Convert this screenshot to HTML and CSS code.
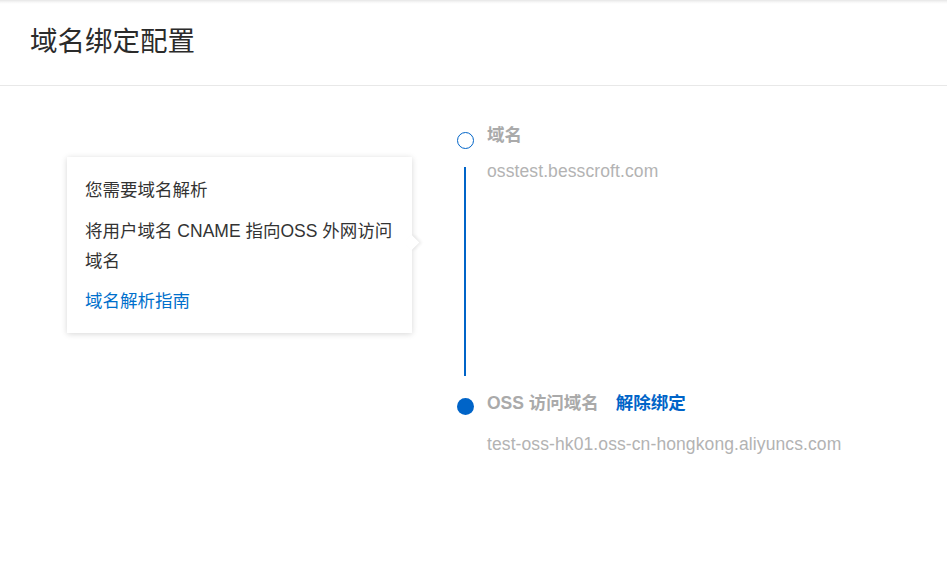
FILE: index.html
```html
<!DOCTYPE html>
<html lang="zh-CN">
<head>
<meta charset="utf-8">
<title>域名绑定配置</title>
<link rel="stylesheet" href="styles.css">
</head>
<body>
<header class="page-header">
  <h1 class="page-title">域名绑定配置</h1>
</header>
<main class="content">
  <div class="tip">
    <p class="tip-line">您需要域名解析</p>
    <p class="tip-line tip-gap">将用户域名 CNAME 指向OSS 外网访问域名</p>
    <a class="tip-link" href="#">域名解析指南</a>
    <span class="tip-arrow"></span>
  </div>
  <div class="timeline">
    <span class="dot dot-outline"></span>
    <div class="step-title">域名</div>
    <span class="connector"></span>
    <div class="step-value">osstest.besscroft.com</div>
    <span class="dot dot-filled"></span>
    <div class="step-title step-title-2">OSS 访问域名<a class="unbind" href="#">解除绑定</a></div>
    <span class="empty"></span>
    <div class="step-value step-value-2">test-oss-hk01.oss-cn-hongkong.aliyuncs.com</div>
  </div>
</main>
</body>
</html>
```
FILE: styles.css
```css
* { box-sizing: border-box; }
html, body { margin: 0; padding: 0; background: #fff; }
body {
  font-family: "Liberation Sans", "Noto Sans CJK SC", sans-serif;
  color: #333;
  width: 947px;
  height: 581px;
  overflow: hidden;
}
.page-header {
  height: 86px;
  border-bottom: 1px solid #e8e8e8;
  background: linear-gradient(to bottom, #e6e6e6 0, #f6f6f6 2px, #fff 4px);
  padding: 24px 0 0 30px;
}
.page-title {
  margin: 0;
  font-weight: normal;
  font-size: 27.5px;
  line-height: 36px;
  color: #2b2b2b;
}
.content {
  display: flex;
  align-items: flex-start;
  padding-left: 67px;
}
.tip {
  position: relative;
  width: 345px;
  margin-top: 71px;
  padding: 18px 14px 17px 18px;
  background: #fff;
  box-shadow: 0 1px 6px rgba(0, 0, 0, 0.16);
  font-size: 17.5px;
  line-height: 30px;
}
.tip-line { margin: 0; color: #333; }
.tip-gap { margin-top: 11px; }
.tip-link {
  display: block;
  margin-top: 10px;
  color: #0070cc;
  text-decoration: none;
}
.tip-arrow {
  position: absolute;
  right: -5px;
  top: 80px;
  width: 11px;
  height: 11px;
  background: #fff;
  transform: rotate(45deg);
  box-shadow: 2px -2px 3px rgba(0, 0, 0, 0.07);
}
.timeline {
  margin-top: 37px;
  margin-left: 44px;
  display: grid;
  grid-template-columns: 18px auto;
  column-gap: 13px;
  align-items: start;
}
.dot {
  width: 17px;
  height: 17px;
  border-radius: 50%;
  justify-self: center;
}
.dot-outline {
  margin-top: 9px;
  border: 1.5px solid #0064c8;
  background: #fff;
}
.dot-filled {
  margin-top: 22px;
  background: #0064c8;
}
.connector {
  justify-self: center;
  display: block;
  width: 2px;
  height: 209px;
  margin-top: 18px;
  background: #0064c8;
}
.step-title {
  font-size: 17.5px;
  line-height: 24px;
  font-weight: bold;
  color: #aaa;
}
.step-title-2 { margin-top: 15px; }
.unbind {
  margin-left: 17px;
  color: #0064c8;
  text-decoration: none;
}
.step-value {
  margin-top: 10px;
  font-size: 17.5px;
  line-height: 24px;
  color: #b3b3b3;
  letter-spacing: 0.1px;
}
.step-value-2 { margin-top: 17px; }
```
